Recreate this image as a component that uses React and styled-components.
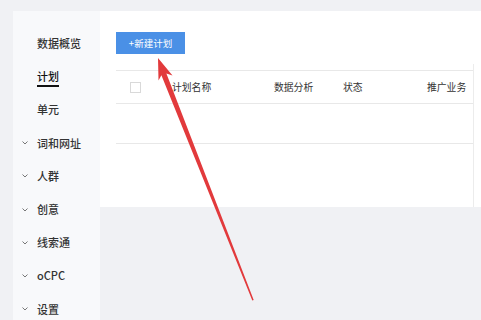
import React from "react";
import styled, { createGlobalStyle } from "styled-components";

const Global = createGlobalStyle`
  html, body { margin: 0; padding: 0; background: #f0f1f4; }
  body { font-family: "Noto Sans CJK SC", "Noto Sans", sans-serif; color: #333; }
  * { box-sizing: border-box; }
`;

const Page = styled.div`
  position: relative;
  width: 481px;
  height: 320px;
  overflow: hidden;
  display: flex;
  padding: 11px 0 0 13px;
  background: #f0f1f4;
`;

const Sidebar = styled.nav`
  width: 87px;
  flex: none;
  background: #f8f9fb;
  padding-top: 16px;
  display: flex;
  flex-direction: column;
`;

const NavItem = styled.div`
  height: 33.2px;
  flex: none;
  display: flex;
  align-items: center;
  padding-left: 9px;
  font-size: 11px;
  line-height: 1;
  font-weight: 500;
  color: ${(p) => (p.$active ? "#111" : "#333")};
`;

const Chevron = styled.span`
  width: 15px;
  display: flex;
  align-items: center;
  color: #777;
`;

const Label = styled.span`
  position: relative;
  line-height: 1;
  ${(p) =>
    p.$active &&
    `
    &::after {
      content: "";
      position: absolute;
      left: 0;
      right: 0;
      bottom: -5px;
      height: 2px;
      background: #111;
    }
  `}
`;

const Main = styled.div`
  flex: 1;
  display: flex;
  flex-direction: column;
`;

const Panel = styled.section`
  height: 196px;
  background: #fff;
  padding: 21px 0 0 16px;
  display: flex;
  flex-direction: column;
`;

const Button = styled.button`
  width: 69px;
  height: 22px;
  border: none;
  background: #4a90e6;
  color: #fff;
  font-family: inherit;
  font-size: 9.5px;
  padding: 0;
  cursor: pointer;
`;

const TableBox = styled.div`
  margin-top: 10px;
  margin-right: 7px;
  flex: 1;
  padding-top: 6px;
  border-right: 1px solid #ececec;
`;

const Row = styled.div`
  display: grid;
  grid-template-columns: 56px 102px 69px 84px 1fr;
  align-items: center;
  height: ${(p) => p.$h}px;
  border-top: ${(p) => (p.$top ? "1px solid #e8e8e8" : "none")};
  border-bottom: 1px solid #e8e8e8;
  font-size: 9.8px;
  color: #333;
`;

const Check = styled.span`
  width: 11px;
  height: 11px;
  margin-left: 14px;
  border: 1px solid #d9d9d9;
  background: #fff;
`;

const Arrow = styled.svg`
  position: absolute;
  left: 0;
  top: 0;
  pointer-events: none;
`;

const ChevronIcon = () => (
  <svg width="6" height="4" viewBox="0 0 6 4">
    <path d="M0.5 0.5 L3 3 L5.5 0.5" fill="none" stroke="#777" strokeWidth="1" />
  </svg>
);

const nav = [
  { t: "数据概览" },
  { t: "计划", active: true },
  { t: "单元" },
  { t: "词和网址", c: true },
  { t: "人群", c: true },
  { t: "创意", c: true },
  { t: "线索通", c: true },
  { t: "oCPC", c: true },
  { t: "设置", c: true },
];

export default function App() {
  return (
    <>
      <Global />
      <Page>
        <Sidebar>
          {nav.map((n) => (
            <NavItem key={n.t} $active={n.active}>
              <Chevron>{n.c && <ChevronIcon />}</Chevron>
              <Label $active={n.active}>{n.t}</Label>
            </NavItem>
          ))}
        </Sidebar>
        <Main>
          <Panel>
            <Button>+新建计划</Button>
            <TableBox>
              <Row $h={34} $top>
                <Check />
                <span>计划名称</span>
                <span>数据分析</span>
                <span>状态</span>
                <span>推广业务</span>
              </Row>
              <Row $h={40} />
            </TableBox>
          </Panel>
        </Main>
        <Arrow width="481" height="320" viewBox="0 0 481 320">
          <polygon
            points="158,58 172.5,75.5 166.4,73.4 253.7,300 252.3,300.4 161.4,75.3 158.5,80.5"
            fill="#e23a3c"
          />
        </Arrow>
      </Page>
    </>
  );
}
